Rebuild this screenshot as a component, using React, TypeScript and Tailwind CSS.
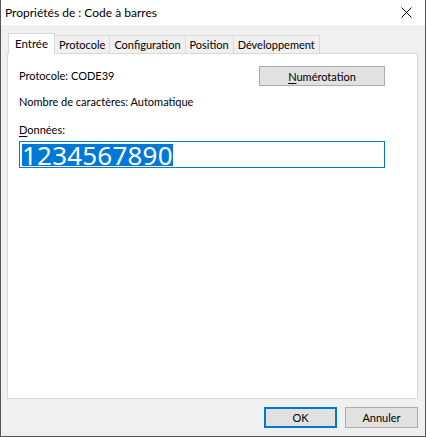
import React from 'react'

const tabs = ['Entrée', 'Protocole', 'Configuration', 'Position', 'Développement']

function App() {
    return (
        <div className="w-[426px] h-[437px] flex flex-col bg-[#f0f0f0] border-x border-b border-[#555555] text-[11px] text-black" style={{ fontFamily: 'Lato, "Segoe UI", sans-serif' }}>
            <div className="h-[25px] bg-white flex items-center justify-between pl-[4px] pr-[13px] shrink-0">
                <span className="leading-none text-[12px]">Propriétés de : Code à barres</span>
                <svg width="11" height="11" viewBox="0 0 11 11" className="text-black">
                    <path d="M0.5 0.5 L10.5 10.5 M10.5 0.5 L0.5 10.5" stroke="currentColor" strokeWidth="1" />
                </svg>
            </div>

            <div className="flex items-end h-[28px] pl-[7px] shrink-0">
                {tabs.map((t, i) =>
                    i === 0 ? (
                        <div key={t} className="h-[21px] w-[47px] justify-center bg-white border border-b-0 border-[#d9d9d9] flex items-center relative top-[1px] z-10 leading-none text-[11.5px]">
                            {t}
                        </div>
                    ) : (
                        <div key={t} className="h-[18px] px-[4px] bg-[#f0f0f0] border border-b-0 border-l-0 border-[#d9d9d9] flex items-center leading-none">
                            {t}
                        </div>
                    )
                )}
            </div>

            <div className="ml-[6px] w-[411px] h-[346px] bg-white border border-[#d9d9d9] flex flex-col pl-[11px] pr-[32px] shrink-0">
                <div className="flex items-center justify-between mt-[12px] h-[20px]">
                    <span>Protocole: CODE39</span>
                    <button className="w-[126px] h-[20px] bg-[#e1e1e1] border border-[#adadad] leading-none first-letter:underline underline-offset-2">
                        Numérotation
                    </button>
                </div>
                <div className="mt-[6px] h-[20px] flex items-center">Nombre de caractères: Automatique</div>
                <div className="mt-[10px] h-[16px] flex items-center">
                    <span className="block first-letter:underline underline-offset-2">Données:</span>
                </div>
                <div className="mt-[3px] h-[27px] border border-[#0078d7] flex items-center px-[2px]">
                    <span className="bg-[#0078d7] text-white text-[26px] leading-[22px] h-[22px] flex items-center tracking-[0.2px]" style={{ fontFamily: '"Noto Sans", sans-serif' }}>1234567890</span>
                </div>
            </div>

            <div className="flex justify-end gap-[8px] mt-[8px] pr-[7px]">
                <button className="w-[73px] h-[21px] bg-[#e1e1e1] border-2 border-[#0078d7] leading-none">OK</button>
                <button className="w-[73px] h-[21px] bg-[#e1e1e1] border border-[#adadad] leading-none">Annuler</button>
            </div>
        </div>
    )
}

export default App
